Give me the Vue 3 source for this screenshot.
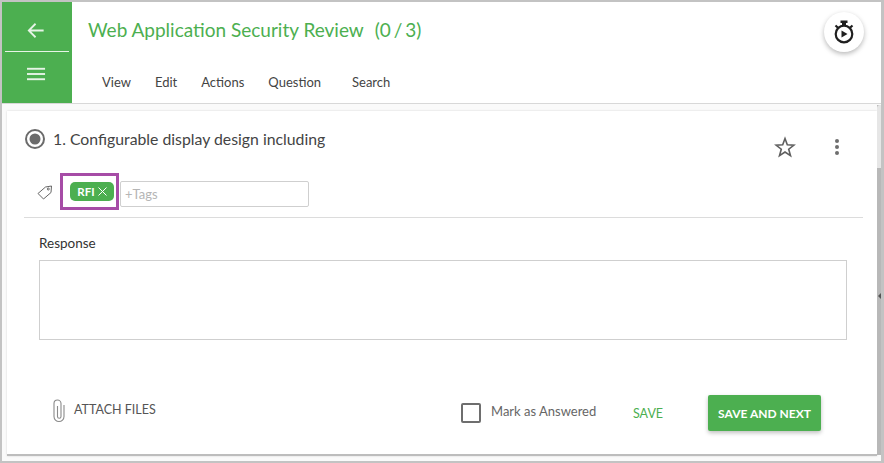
<script setup>
const menus = ['View', 'Edit', 'Actions', 'Question', 'Search']
</script>

<template>
  <div class="frame">
    <header class="header">
      <div class="side">
        <div class="side-top">
          <svg width="18" height="17" viewBox="0 0 20 18" fill="none" stroke="#e6f4e6" stroke-width="2"><path d="M18.500 9H2M9.500 1.500 2 9l7.500 7.500" /></svg>
        </div>
        <div class="side-bottom">
          <svg width="19" height="14" viewBox="0 0 20 14" fill="#e6f4e6"><rect x="0" y="0.500" width="19" height="2" /><rect x="0" y="6" width="19" height="2" /><rect x="0" y="11.500" width="19" height="2" /></svg>
        </div>
      </div>
      <div class="head-main">
        <h1 class="title"><span>Web Application Security Review</span><span class="count">(0 / 3)</span></h1>
        <nav class="menu">
          <span v-for="m in menus" :key="m" class="menu-item">{{ m }}</span>
        </nav>
      </div>
      <div class="timer">
        <svg width="22" height="26" viewBox="0 0 22 26" fill="none" stroke="#1f1f1f">
          <path d="M7.500 1.500h7v2.500h-1.500v2.500h-4V4H7.500z" fill="#1f1f1f" stroke="none" />
          <circle cx="11" cy="15" r="8.300" stroke-width="2.200" />
          <path d="m2.500 6.500 2.500 2.300M19.500 6.500 17 8.800" stroke-width="2.200" />
          <path d="M8.500 11.500v7l6-3.500z" fill="#1f1f1f" stroke="none" />
        </svg>
      </div>
    </header>
    <div class="body">
      <main class="card">
        <div class="q-row">
          <svg class="radio" width="22" height="22" viewBox="0 0 22 22"><circle cx="11" cy="11" r="9" fill="none" stroke="#6b6b6b" stroke-width="2" /><circle cx="11" cy="11" r="5.500" fill="#6b6b6b" /></svg>
          <span class="q-text">1. Configurable display design including</span>
          <svg class="star" width="22" height="22" viewBox="0 0 22 22" fill="none" stroke="#5f5f5f" stroke-width="1.600" stroke-linejoin="miter"><path d="M11 2.500 13.300 8.800 20 9.100 14.700 13.200 16.500 19.600 11 16 5.500 19.600 7.300 13.200 2 9.100 8.700 8.800z" /></svg>
          <svg class="dots" width="6" height="18" viewBox="0 0 6 18" fill="#6e6e6e"><circle cx="3" cy="3" r="2" /><circle cx="3" cy="9" r="2" /><circle cx="3" cy="15" r="2" /></svg>
        </div>
        <div class="tag-row">
          <svg class="tag-icon" width="16" height="16" viewBox="0 0 16 16" fill="none" stroke="#666" stroke-width="1"><path d="M1 9.500 8.500 3l6-1-.5 6.500L6.500 15z" /><circle cx="11.300" cy="5" r="1" /></svg>
          <div class="highlight">
            <span class="chip">RFI
              <svg width="9" height="9" viewBox="0 0 9 9" stroke="#fff" stroke-width="1"><path d="m.5.500 8 8M8.500.500l-8 8" /></svg>
            </span>
          </div>
          <div class="tag-input">+Tags</div>
        </div>
        <div class="response">
          <label class="response-label">Response</label>
          <div class="textarea"></div>
        </div>
        <footer class="actions">
          <div class="attach">
            <svg width="14" height="24" viewBox="0 0 14 24" fill="none" stroke="#8a8a8a" stroke-width="1.100"><path d="M6.500 7v10.500a1.750 1.750 0 0 0 3.500 0V4.500a3.500 3.500 0 0 0-7 0v13a5 5 0 0 0 10 0V6" /></svg>
            <span class="attach-text">ATTACH FILES</span>
          </div>
          <div class="check"></div>
          <span class="check-label">Mark as Answered</span>
          <span class="save">SAVE</span>
          <button class="next">SAVE AND NEXT</button>
        </footer>
      </main>
      <div class="track">
        <div class="thumb"></div>
        <span class="nub"></span>
      </div>
    </div>
  </div>
</template>

<style>
body { margin: 0; }
</style>

<style scoped>
.frame {
  width: 884px;
  height: 463px;
  box-sizing: border-box;
  border: 2px solid #c3c3c3;
  border-right-width: 3px;
  background: #fff;
  display: flex;
  flex-direction: column;
  font-family: "Lato", "Noto Sans", sans-serif;
  overflow: hidden;
}
.header {
  height: 102px;
  box-sizing: border-box;
  border-bottom: 1px solid #d8d8d8;
  display: flex;
  flex: none;
}
.side {
  width: 70px;
  height: 101px;
  background: #4caf50;
  display: flex;
  flex-direction: column;
  align-items: center;
}
.side-top {
  width: 64px;
  height: 50px;
  box-sizing: border-box;
  border-bottom: 1px solid #e6f4e6;
  display: flex;
  align-items: center;
  justify-content: center;
  padding: 8px 2px 0 0;
}
.side-bottom {
  flex: 1;
  display: flex;
  align-items: center;
  justify-content: center;
  padding: 0 2px 8px 0;
}
.head-main {
  flex: 1;
  padding-left: 16px;
}
.title {
  margin: 16px 0 0;
  font-size: 19px;
  line-height: 24px;
  font-weight: 400;
  color: #4caf50;
  display: flex;
  gap: 11px;
}
.count { word-spacing: -2px; }
.menu {
  margin-top: 31px;
  padding-left: 14px;
  display: flex;
  font-size: 13px;
  line-height: 18px;
  color: #444;
}
.menu-item { margin-right: 24px; }
.menu-item:nth-child(4) { margin-right: 31px; }
.timer {
  width: 40px;
  height: 40px;
  margin: 10px 17px 0 0;
  border-radius: 50%;
  background: #fff;
  box-shadow: 0 2px 5px rgba(0, 0, 0, 0.28);
  display: flex;
  align-items: center;
  justify-content: center;
}
.body {
  flex: 1;
  min-height: 0;
  display: flex;
  background: #fafafa;
}
.card {
  width: 870px;
  margin: 7px 0 5px 5px;
  box-sizing: border-box;
  background: #fff;
  border-bottom: 2px solid #bdbdbd;
  box-shadow: 0 0 2px rgba(0, 0, 0, 0.15);
  display: flex;
  flex-direction: column;
  padding: 16px 0 0 17px;
}
.q-row {
  display: flex;
  align-items: center;
  height: 22px;
  padding-right: 37px;
}
.q-text {
  margin-left: 7px;
  font-size: 15.800px;
  color: #444;
  flex: 1;
}
.radio { flex: none; margin-top: 1px; }
.star { margin: 17px 0 0; }
.dots { margin: 17px 0 0 38px; }
.tag-row {
  margin-top: 15px;
  margin-right: 14px;
  height: 54px;
  box-sizing: border-box;
  border-bottom: 1px solid #dcdcdc;
  display: flex;
  align-items: flex-start;
}
.tag-icon { margin: 20px 0 0 13px; }
.highlight {
  margin: 9px 0 0 7px;
  width: 59px;
  height: 37px;
  box-sizing: border-box;
  border: 3px solid #a64ca6;
  display: flex;
  align-items: flex-start;
  padding: 6px 0 0 7px;
}
.chip {
  width: 44px;
  height: 19px;
  box-sizing: border-box;
  background: #4caf50;
  border-radius: 5px;
  color: #fff;
  font-size: 11.500px;
  font-weight: 700;
  display: flex;
  align-items: center;
  justify-content: center;
  gap: 3px;
}
.tag-input {
  margin: 17px 0 0 1px;
  width: 189px;
  height: 26px;
  box-sizing: border-box;
  border: 1px solid #cfcfcf;
  border-radius: 2px;
  padding-left: 4px;
  color: #b5b5b5;
  font-size: 13px;
  line-height: 24px;
}
.response { padding: 16px 0 0 15px; }
.response-label {
  display: block;
  font-size: 13.500px;
  line-height: 18px;
  color: #333;
}
.textarea {
  margin-top: 8px;
  width: 808px;
  height: 80px;
  box-sizing: border-box;
  border: 1px solid #cfcfcf;
}
.actions {
  margin-top: 54px;
  display: flex;
  align-items: center;
  height: 38px;
}
.attach {
  display: flex;
  align-items: center;
  gap: 9px;
  margin-left: 27px;
  width: 410px;
  font-size: 12.500px;
  color: #555;
  position: relative;
  top: -2px;
}
.attach-text {
  position: relative;
  top: -2px;
}
.check {
  width: 20px;
  height: 20px;
  box-sizing: border-box;
  border: 2px solid #6e6e6e;
  border-radius: 2px;
}
.check-label {
  margin-left: 10px;
  width: 142px;
  font-size: 13px;
  color: #666;
  position: relative;
  top: -2px;
}
.save {
  width: 75px;
  font-size: 12.500px;
  color: #4caf50;
}
.next {
  width: 113px;
  height: 36px;
  border: 0;
  border-radius: 2px;
  background: #4caf50;
  color: #fff;
  font: 700 12px "Lato", "Noto Sans", sans-serif;
  box-shadow: 0 2px 4px rgba(0, 0, 0, 0.25);
  padding: 0;
}
.track {
  width: 4px;
  position: relative;
  background: #b8b8b8;
  margin: 1px 0 6px;
}
.thumb {
  height: 63px;
  background: #e6e6e6;
  border-radius: 3px 0 0 0;
}
.nub {
  position: absolute;
  left: 1px;
  top: 188px;
  border: 3px solid transparent;
  border-right-color: #555;
  border-left-width: 0;
}
</style>
